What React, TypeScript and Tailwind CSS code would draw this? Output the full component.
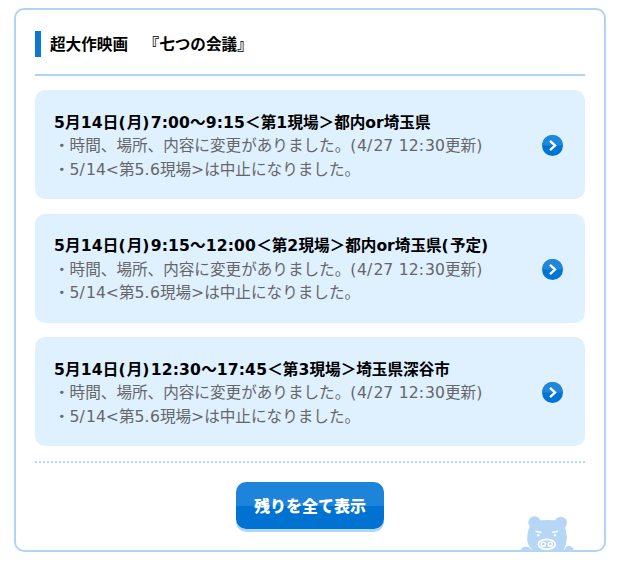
type Schedule = {
  title: string;
  notes: string[];
};

const notes = [
  "・時間、場所、内容に変更がありました。(4/27 12:30更新)",
  "・5/14<第5.6現場>は中止になりました。",
];

const schedules: Schedule[] = [
  { title: "5月14日(月)7:00〜9:15＜第1現場＞都内or埼玉県", notes },
  { title: "5月14日(月)9:15〜12:00＜第2現場＞都内or埼玉県(予定)", notes },
  { title: "5月14日(月)12:30〜17:45＜第3現場＞埼玉県深谷市", notes },
];

function ArrowIcon() {
  return (
    <svg className="mt-0.5 h-[21px] w-[21px] shrink-0" viewBox="0 0 21 21" fill="none">
      <circle cx="10.5" cy="10.5" r="10.5" fill="#0074d4" />
      <path d="M0 10.5a10.5 10.5 0 0 1 21 0z" fill="#2086d9" />
      <path d="M8 5.8l5 4.7-5 4.7" stroke="#fff" strokeWidth="2.4" />
    </svg>
  );
}

function Pig() {
  return (
    <svg
      className="absolute right-[29px] -bottom-px h-[36px] w-[54px]"
      viewBox="0 0 54 36"
      fill="#b5d7f5"
    >
      <circle cx="13.5" cy="7.5" r="6.2" />
      <circle cx="39.7" cy="8" r="6.2" />
      <path d="M12 36C8 32 5.5 27 6.3 21.5C7 13 11 6.5 15 5.8Q26.5 4.4 38 5.8C42 7 45.3 13 45.8 21C46 27 44.5 32 42 36z" />
      <path d="M0 36C0 33 2.2 31.8 5 31.8S10 33 10 36zM43.5 36C43.5 32.5 45.5 31 48.2 31S52.5 32.5 52.5 36z" />
      <path
        d="M14.5 16.3l6 1.2M31 17.5l6-1.2"
        stroke="#fff"
        strokeWidth="1.6"
      />
      <circle cx="17.3" cy="20.3" r="1.2" fill="#fff" />
      <circle cx="34" cy="20.3" r="1.2" fill="#fff" />
      <ellipse cx="25.8" cy="29.3" rx="8.4" ry="4.9" stroke="#fff" strokeWidth="1.7" />
      <ellipse cx="22.3" cy="29.2" rx="2.1" ry="1.9" stroke="#fff" strokeWidth="1.5" />
      <ellipse cx="29.3" cy="29.2" rx="2.1" ry="1.9" stroke="#fff" strokeWidth="1.5" />
    </svg>
  );
}

// Opens up the half-width punctuation a little, between the wide kanji
function Title({ text }: { text: string }) {
  return text.split(/([()]|\d+)/).map((part, i) => {
    if (/^[()]$/.test(part)) {
      return <span key={i} className="tracking-[1.2px]">{part}</span>;
    }
    return /^\d+$/.test(part) ? <span key={i} className="tracking-[0.2px]">{part}</span> : part;
  });
}

function Note({ text }: { text: string }) {
  return text.split(/([():/ .])/).map((part, i) => {
    if (/^[:/]$/.test(part)) {
      return <span key={i} className="tracking-[1.2px]">{part}</span>;
    }
    return /^[() .]$/.test(part) ? <span key={i} className="tracking-[0.6px]">{part}</span> : part;
  });
}

function ScheduleCard({ title, notes }: Schedule) {
  return (
    <li className="flex h-[109px] items-center justify-between rounded-[10px] bg-[#dff0ff] pr-[22px] pl-[19px]">
      <div className="pt-[5px] text-[15.6px] leading-[23.4px] whitespace-nowrap text-[#666]">
        <p className="font-bold text-black">
          <Title text={title} />
        </p>
        {notes.map((note) => (
          <p key={note}>
            <Note text={note} />
          </p>
        ))}
      </div>
      <ArrowIcon />
    </li>
  );
}

export default function App() {
  return (
    <div className="h-[566px] w-[620px] bg-white pt-2 pl-3.5 font-['DejaVu_Sans','Noto_Sans_CJK_JP',sans-serif] [text-spacing-trim:space-all]">
      <section className="relative h-[544px] w-[592px] rounded-[10px] border-2 border-[#b0d4f4] px-[19px] pt-[21px]">
        <header className="h-[45px] border-b-2 border-[#b0d4f4]">
          <h1 className="h-[26px] border-l-6 border-[#0b77d0] pl-[9px] text-[15.6px] leading-[28px] font-bold">
            超大作映画　『七つの会議』
          </h1>
        </header>
        <ul className="mt-3.5 flex flex-col gap-[14.5px]">
          {schedules.map((schedule) => (
            <ScheduleCard key={schedule.title} {...schedule} />
          ))}
        </ul>
        <div className="mt-[15px] border-t-2 border-dotted border-[#b0d4f4]" />
        <button className="mx-auto mt-[19px] block h-[47px] w-[148px] rounded-[10px] bg-linear-to-b from-[#1d84d9] from-50% to-[#0073d2] to-50% pb-0.5 font-['Noto_Sans_CJK_JP',sans-serif] text-[16px] font-black text-white shadow-[0_3px_0_#b0d7f8]">
          残りを全て表示
        </button>
        <Pig />
      </section>
    </div>
  );
}
